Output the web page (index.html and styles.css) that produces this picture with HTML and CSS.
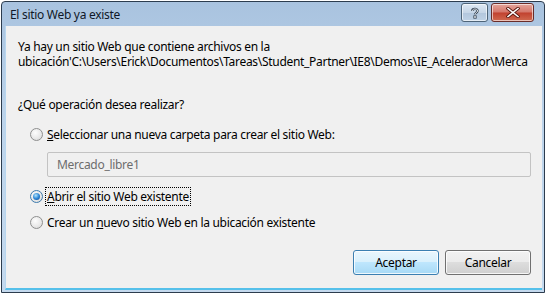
FILE: index.html
```html
<!DOCTYPE html>
<html lang="es">
<head>
    <meta charset="UTF-8">
    <title>El sitio Web ya existe</title>
    <link rel="stylesheet" href="styles.css">
</head>
<body>
    <div class="window">
        <div class="titlebar">
            <span class="title">El sitio Web ya existe</span>
            <div class="caption-buttons">
                <div class="cap-btn help">
                    <svg width="12" height="12" viewBox="0 0 12 12">
                        <path d="M3.2 4 C3.2 1.4 8.6 1.2 8.6 3.8 C8.6 5.6 6 5.6 6 7.6" fill="none" stroke="#2b3a4c" stroke-width="2.2"/>
                        <path d="M3.2 4 C3.2 1.4 8.6 1.2 8.6 3.8 C8.6 5.6 6 5.6 6 7.6" fill="none" stroke="#fff" stroke-width="0.9"/>
                        <rect x="4.8" y="8.8" width="2.4" height="2.4" fill="#fff" stroke="#2b3a4c" stroke-width="0.8"/>
                    </svg>
                </div>
                <div class="cap-btn close">
                    <svg width="14" height="11" viewBox="0 0 14 11">
                        <path d="M2 1.5 L12 9.5 M12 1.5 L2 9.5" stroke="#5a1a12" stroke-width="3.4" stroke-linecap="square"/>
                        <path d="M2 1.5 L12 9.5 M12 1.5 L2 9.5" stroke="#fff" stroke-width="1.6" stroke-linecap="square"/>
                    </svg>
                </div>
            </div>
        </div>
        <div class="client">
            <p class="message">Ya hay un sitio Web que contiene archivos en la<br>ubicación'C:\Users\Erick\Documentos\Tareas\Student_Partner\IE8\Demos\IE_Acelerador\Merca</p>
            <p class="question">¿Qué operación desea realizar?</p>

            <div class="option">
                <span class="radio"></span>
                <span class="label"><u>S</u>eleccionar una nueva carpeta para crear el sitio Web:</span>
            </div>
            <div class="textbox">Mercado_libre1</div>

            <div class="option option-open">
                <span class="radio checked"></span>
                <span class="label focused"><u>A</u>brir el sitio Web existente</span>
            </div>
            <div class="option">
                <span class="radio"></span>
                <span class="label">Crear un <u>n</u>uevo sitio Web en la ubicación existente</span>
            </div>

            <div class="actions">
                <button class="btn default">Aceptar</button>
                <button class="btn">Cancelar</button>
            </div>
        </div>
    </div>
</body>
</html>
```

FILE: styles.css
```css
body {
    margin: 0;
    background: #fff;
    font-family: "Noto Sans", "Open Sans", sans-serif;
    font-size: 12px;
    letter-spacing: -0.3px;
    color: #000;
}
.window {
    margin: 1px 0 0 1px;
    width: 542px;
    height: 290px;
    border: 1px solid #2c3c4e;
    border-radius: 4px 4px 0 0;
    background: linear-gradient(to bottom, #a9c3df 0%, #bcd3ea 40%, #c4d9ee 100%);
    display: flex;
    flex-direction: column;
}
.titlebar {
    height: 24px;
    display: flex;
    align-items: center;
    justify-content: space-between;
    padding: 0 10px 0 8px;
}
.title {
    color: #101828;
    padding-top: 1px;
}
.caption-buttons {
    display: flex;
    gap: 3px;
    margin-top: -3px;
}
.cap-btn {
    height: 17px;
    border: 1px solid #4e6478;
    border-radius: 3px;
    display: flex;
    align-items: center;
    justify-content: center;
    box-shadow: inset 0 0 0 1px rgba(255, 255, 255, 0.6);
}
.help {
    width: 25px;
    background: linear-gradient(to bottom, #dfe9f4 0%, #c6d6e7 50%, #b2c6dc 51%, #bfd2e6 100%);
}
.close {
    width: 41px;
    border-color: #6a2c28;
    background: linear-gradient(to bottom, #e4a59b 0%, #d4766a 48%, #c1412f 52%, #d06a50 100%);
}
.client {
    flex: 1;
    margin: 0 2px 2px 3px;
    background: #f0f0f0;
    border-left: 1px solid #b7d6ef;
    border-bottom: 2px solid #55c0ea;
    padding: 13px 0 0 12px;
    display: flex;
    flex-direction: column;
}
.message {
    margin: 0;
    line-height: 15px;
    white-space: nowrap;
}
.question {
    margin: 28px 0 0;
    line-height: 15px;
}
.option {
    display: flex;
    align-items: center;
    gap: 4px;
    margin-left: 12px;
    height: 16px;
    margin-top: 14px;
}
.option-open {
    margin-top: 11px;
}
.option + .option {
    margin-top: 10px;
}
.radio {
    width: 11px;
    height: 11px;
    border: 1px solid #8e8f8f;
    border-radius: 50%;
    background: radial-gradient(circle at 40% 35%, #fdfdfd 0%, #e9e9e9 55%, #d4d4d4 100%);
    position: relative;
}
.radio.checked {
    border-color: #3d7bad;
}
.radio.checked::after {
    content: "";
    position: absolute;
    left: 2px;
    top: 2px;
    width: 7px;
    height: 7px;
    border-radius: 50%;
    background: radial-gradient(circle at 40% 35%, #b4e4fb 0%, #2f8ad8 50%, #0d3d86 100%);
}
.label.focused {
    outline: 1px dotted #000;
    outline-offset: 0;
    padding: 0 1px;
    margin-left: -1px;
}
.textbox {
    margin: 10px 11px 0 29px;
    height: 23px;
    border: 1px solid #c3c3c3;
    border-radius: 2px;
    background: #f0f0f0;
    color: #6d6d6d;
    display: flex;
    align-items: center;
    padding-left: 9px;
}
.actions {
    display: flex;
    justify-content: flex-end;
    gap: 6px;
    margin: 20px 11px 0 0;
}
.btn {
    width: 86px;
    height: 25px;
    font: inherit;
    letter-spacing: inherit;
    color: #000;
    border: 1px solid #707070;
    border-radius: 3px;
    background: linear-gradient(to bottom, #f2f2f2 0%, #ebebeb 49%, #dddddd 50%, #cfcfcf 100%);
    box-shadow: inset 0 0 0 1px rgba(255, 255, 255, 0.8);
    padding: 0;
}
.btn.default {
    border-color: #3c7fb1;
    background: linear-gradient(to bottom, #eaf6fd 0%, #d9f0fc 49%, #bee6fd 50%, #a7d9f5 100%);
}
```
